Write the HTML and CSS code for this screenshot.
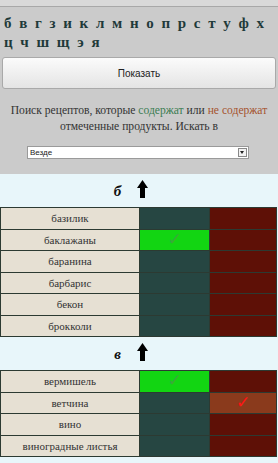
FILE: index.html
```html
<!DOCTYPE html>
<html lang="ru">
<head>
    <meta charset="UTF-8">
    <title>Поиск рецептов</title>
    <link rel="stylesheet" href="styles.css">
</head>
<body>
<div class="topbar"></div>
<div class="letters">
    <div class="lrow">
        <a href="#">б</a><a href="#">в</a><a href="#">г</a><a href="#">з</a><a href="#">и</a><a href="#">к</a><a href="#">л</a><a href="#">м</a><a href="#">н</a><a href="#">о</a><a href="#">п</a><a href="#">р</a><a href="#">с</a><a href="#">т</a><a href="#">у</a><a href="#">ф</a><a href="#">х</a>
    </div>
    <div class="lrow">
        <a href="#">ц</a><a href="#">ч</a><a href="#">ш</a><a href="#">щ</a><a href="#">э</a><a href="#">я</a>
    </div>
</div>
<div class="btnbox">
    <button class="show">Показать</button>
</div>
<p class="info">Поиск рецептов, которые <span class="yes">содержат</span> или <span class="no">не содержат</span><br>отмеченные продукты. Искать в</p>
<div class="selbox">
    <div class="sel"><span>Везде</span><i class="drop"></i></div>
</div>
<div class="tablebox">
    <table class="prod">
        <tr class="head"><td colspan="3"><div class="hwrap"><b>б</b><svg class="up" width="11" height="18" viewBox="0 0 11 18"><polygon points="5.5,0 11,8 8,8 8,18 3,18 3,8 0,8" fill="#000"/></svg></div></td></tr>
        <tr><td class="name">базилик</td><td class="in"></td><td class="out"></td></tr>
        <tr><td class="name">баклажаны</td><td class="in on"><span class="chk">&#10003;</span></td><td class="out"></td></tr>
        <tr><td class="name">баранина</td><td class="in"></td><td class="out"></td></tr>
        <tr><td class="name">барбарис</td><td class="in"></td><td class="out"></td></tr>
        <tr><td class="name">бекон</td><td class="in"></td><td class="out"></td></tr>
        <tr><td class="name">брокколи</td><td class="in"></td><td class="out"></td></tr>
        <tr class="head"><td colspan="3"><div class="hwrap"><b>в</b><svg class="up" width="11" height="18" viewBox="0 0 11 18"><polygon points="5.5,0 11,8 8,8 8,18 3,18 3,8 0,8" fill="#000"/></svg></div></td></tr>
        <tr><td class="name">вермишель</td><td class="in on"><span class="chk">&#10003;</span></td><td class="out"></td></tr>
        <tr><td class="name">ветчина</td><td class="in"></td><td class="out on"><span class="chk">&#10003;</span></td></tr>
        <tr><td class="name">вино</td><td class="in"></td><td class="out"></td></tr>
        <tr><td class="name">виноградные листья</td><td class="in"></td><td class="out"></td></tr>
    </table>
</div>
</body>
</html>
```

FILE: styles.css
```css
* {
    margin: 0;
    padding: 0;
}

body {
    background: #cbcbcb;
    font-family: "Liberation Serif", serif;
    width: 278px;
    overflow: hidden;
}

.topbar {
    height: 6px;
    background: #d9d9d9;
    border-bottom: 1px solid #a8a8a8;
}

.letters {
    padding: 7px 4px 0 4px;
    height: 37px;
}

.lrow {
    display: flex;
    column-gap: 7.7px;
    line-height: 19px;
    white-space: nowrap;
}

.lrow a {
    font-weight: bold;
    font-size: 15px;
    color: #1f3a3a;
    text-decoration: none;
}

.btnbox {
    padding: 6px 2px 0 2px;
}

.show {
    display: block;
    width: 274px;
    height: 32px;
    border: 1px solid #a9a9a9;
    border-radius: 3px;
    background: linear-gradient(#fbfbfb, #e4e4e4);
    font-family: "Liberation Sans", Arial, sans-serif;
    font-size: 10px;
    color: #222;
}

.info {
    margin: 14px 0 0 0;
    text-align: center;
    font-size: 11.6px;
    line-height: 16px;
    color: #333;
}

.yes {
    color: #3b7d52;
}

.no {
    color: #a5532e;
}

.selbox {
    padding: 11px 0 0 27px;
}

.sel {
    width: 220px;
    height: 11px;
    background: #fff;
    border: 1px solid #9a9a9a;
    display: flex;
    justify-content: space-between;
    align-items: center;
    font-family: "Liberation Sans", Arial, sans-serif;
    font-size: 8px;
    color: #222;
}

.sel span {
    padding-left: 2px;
}

.drop {
    width: 9px;
    height: 9px;
    margin-right: 1px;
    border: 1px solid #888;
    box-sizing: border-box;
    background: #f2f2f2;
    position: relative;
}

.drop:after {
    content: "";
    position: absolute;
    left: 1px;
    top: 2px;
    border-left: 2.5px solid transparent;
    border-right: 2.5px solid transparent;
    border-top: 3px solid #222;
}

.tablebox {
    margin-top: 15px;
    background: #e8f6fa;
    padding-bottom: 12px;
}

.prod {
    width: 277px;
    border-collapse: collapse;
}

.prod td {
    border: 1px solid #2c3a32;
    height: 20.5px;
    padding: 0;
    text-align: center;
}

.prod tr.head td {
    height: 33px;
    border: none;
    background: #e8f6fa;
    vertical-align: top;
}

.hwrap {
    display: flex;
    justify-content: center;
    align-items: flex-end;
    gap: 16px;
    padding: 5px 15px 0 0;
    height: 19px;
}

.hwrap b {
    font-style: italic;
    font-size: 15px;
    line-height: 15px;
    color: #111;
    margin-bottom: -1px;
}

.name {
    width: 138px;
    background: #e6e0d3;
    font-size: 11px;
    color: #333;
}

.in {
    width: 69px;
    background: #264642;
}

.out {
    background: #5e1006;
}

.in.on {
    background: #12d512;
}

.out.on {
    background: #8a3a1c;
}

.chk {
    font-family: "DejaVu Sans", sans-serif;
    font-size: 17px;
    line-height: 14px;
}

.in .chk {
    color: #3aa93a;
}

.out .chk {
    color: #ff1414;
    font-weight: bold;
}
```
